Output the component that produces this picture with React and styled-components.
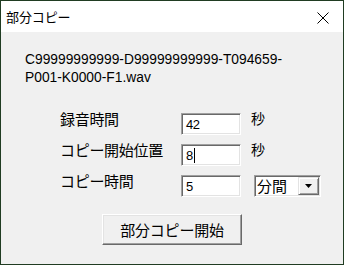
import React from "react";
import styled, { createGlobalStyle } from "styled-components";

const Global = createGlobalStyle`
  html, body { margin: 0; padding: 0; background: #f0f0f0; }
  * { box-sizing: border-box; }
`;

const JP = `"Noto Sans CJK JP", "Noto Sans", sans-serif`;
const LAT = `"Liberation Sans", Arial, sans-serif`;

const Window = styled.div`
  width: 344px;
  height: 265px;
  border: 1px solid #203c22;
  display: flex;
  flex-direction: column;
  background: #f0f0f0;
  overflow: hidden;
`;

const TitleBar = styled.div`
  height: 31px;
  background: #ffffff;
  display: flex;
  align-items: center;
  justify-content: space-between;
  padding-left: 5px;
  padding-right: 14px;
  flex-shrink: 0;
`;

const Title = styled.span`
  font-family: ${JP};
  font-size: 13px;
  line-height: 15px;
  color: #000;
  letter-spacing: -0.1px;
`;

const CloseIcon = styled.svg`
  width: 12px;
  height: 12px;
  display: block;
  margin-top: 2px;
`;

const Body = styled.div`
  flex: 1;
  display: flex;
  flex-direction: column;
  padding: 19px 0 0 24px;
`;

const FileName = styled.div`
  font-family: ${LAT};
  font-size: 13.8px;
  line-height: 18px;
  color: #000;
`;

const Form = styled.div`
  display: grid;
  grid-template-columns: 121px 60px auto;
  row-gap: 9px;
  margin-top: 26px;
  margin-left: 35px;
  align-items: start;
`;

const Label = styled.div`
  font-family: ${JP};
  font-size: 15px;
  line-height: 15px;
  margin-top: -2px;
  color: #000;
  letter-spacing: -0.3px;
  white-space: nowrap;
`;

const Unit = styled.div`
  font-family: ${JP};
  font-size: 14px;
  line-height: 14px;
  margin-top: -2px;
  margin-left: 10px;
  color: #000;
`;

const Field = styled.div`
  width: 60px;
  height: 22px;
  background: #fff;
  border-top: 1px solid #a0a0a0;
  border-left: 1px solid #a0a0a0;
  border-right: 1px solid #ffffff;
  border-bottom: 1px solid #ffffff;
  box-shadow: inset 1px 1px 0 #696969, inset -1px -1px 0 #e3e3e3;
  padding-left: 4px;
  display: flex;
  align-items: center;
  font-family: ${LAT};
  font-size: 13px;
  letter-spacing: -0.4px;
  color: #000;
`;

const Caret = styled.span`
  display: inline-block;
  width: 1px;
  height: 15px;
  background: #000;
  margin-left: 1px;
`;

const Select = styled.div`
  width: 67px;
  height: 22px;
  margin-left: 13px;
  background: #fff;
  border-top: 1px solid #a0a0a0;
  border-left: 1px solid #a0a0a0;
  border-right: 1px solid #ffffff;
  border-bottom: 1px solid #ffffff;
  box-shadow: inset 1px 1px 0 #696969, inset -1px -1px 0 #e3e3e3;
  display: flex;
  align-items: stretch;
  padding: 1px;
`;

const SelectText = styled.div`
  flex: 1;
  font-family: ${JP};
  font-size: 15px;
  line-height: 18px;
  padding-left: 1px;
  color: #000;
`;

const ArrowBtn = styled.div`
  width: 21px;
  background: #f0f0f0;
  border-top: 1px solid #e3e3e3;
  border-left: 1px solid #e3e3e3;
  border-right: 1px solid #696969;
  border-bottom: 1px solid #696969;
  box-shadow: inset 1px 1px 0 #ffffff, inset -1px -1px 0 #a0a0a0;
  display: flex;
  align-items: center;
  justify-content: center;
`;

const Triangle = styled.svg`
  width: 7px;
  height: 4px;
  display: block;
`;

const ButtonRow = styled.div`
  display: flex;
  justify-content: center;
  margin-top: 17px;
  margin-left: -24px;
`;

const Button = styled.div`
  width: 140px;
  height: 31px;
  background: #f0f0f0;
  border-top: 1px solid #ffffff;
  border-left: 1px solid #ffffff;
  border-right: 1px solid #696969;
  border-bottom: 1px solid #696969;
  box-shadow: inset -1px -1px 0 #a0a0a0, inset 1px 1px 0 #e3e3e3;
  display: flex;
  align-items: center;
  justify-content: center;
  font-family: ${JP};
  font-size: 15px;
  letter-spacing: -0.2px;
  color: #000;
`;

export default function App() {
  return (
    <>
      <Global />
      <Window>
        <TitleBar>
          <Title>部分コピー</Title>
          <CloseIcon viewBox="0 0 12 12">
            <path d="M0.5 0.5 L11.5 11.5 M11.5 0.5 L0.5 11.5" stroke="#000" strokeWidth="1" fill="none" />
          </CloseIcon>
        </TitleBar>
        <Body>
          <FileName>
            C99999999999-D99999999999-T094659-
            <br />
            P001-K0000-F1.wav
          </FileName>
          <Form>
            <Label>録音時間</Label>
            <Field>42</Field>
            <Unit>秒</Unit>

            <Label>コピー開始位置</Label>
            <Field>
              8<Caret />
            </Field>
            <Unit>秒</Unit>

            <Label>コピー時間</Label>
            <Field>5</Field>
            <Select>
              <SelectText>分間</SelectText>
              <ArrowBtn>
                <Triangle viewBox="0 0 7 4">
                  <path d="M0 0 L7 0 L3.5 4 Z" fill="#000" />
                </Triangle>
              </ArrowBtn>
            </Select>
          </Form>
          <ButtonRow>
            <Button>部分コピー開始</Button>
          </ButtonRow>
        </Body>
      </Window>
    </>
  );
}
